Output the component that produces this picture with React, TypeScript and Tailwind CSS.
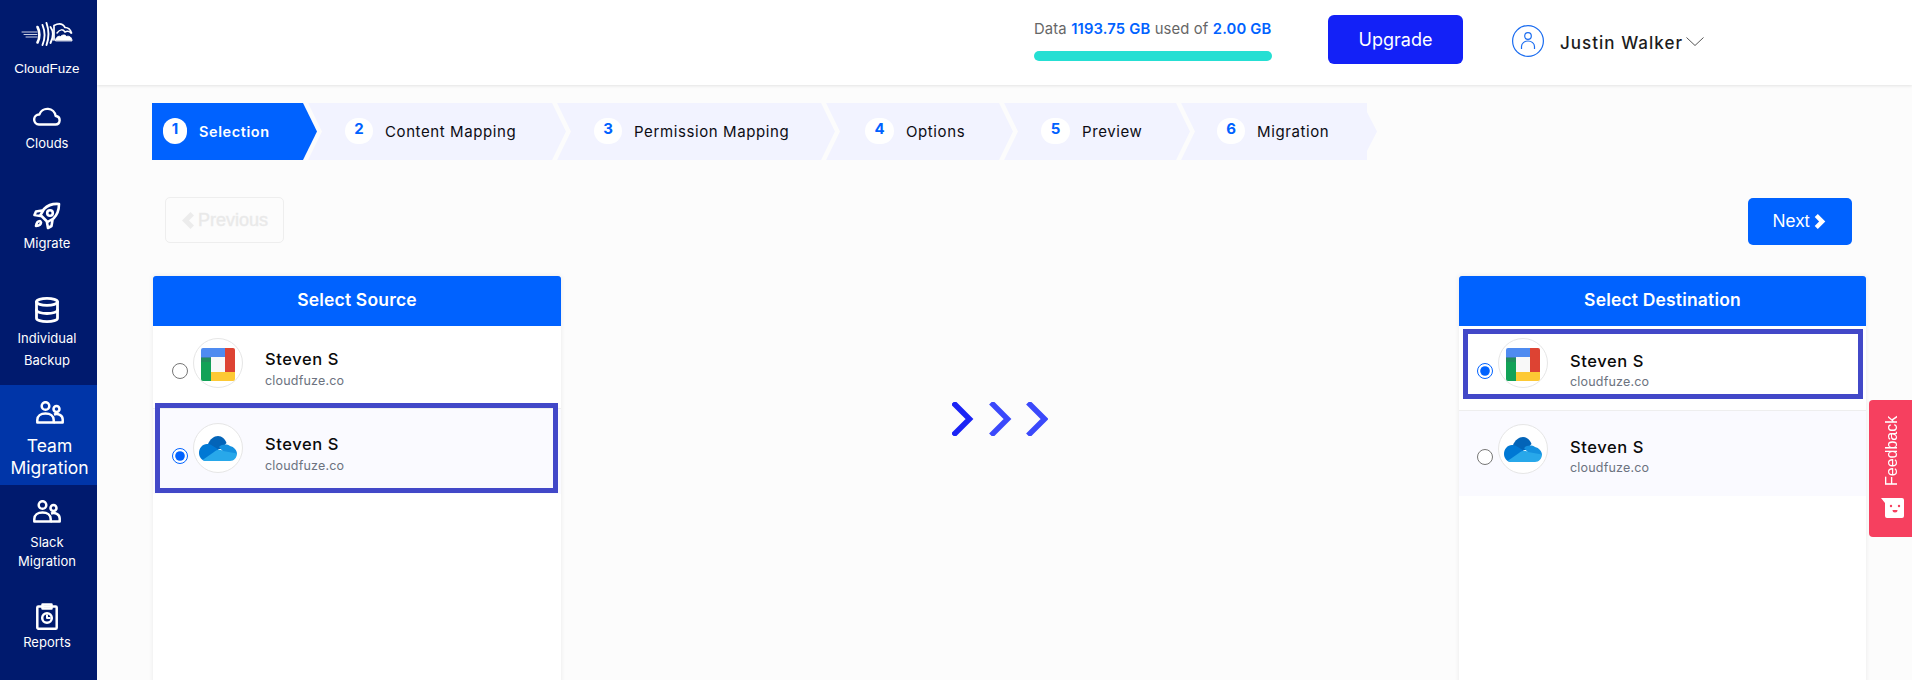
import { Database } from 'lucide-react';

const STEPS = [
  { n: 1, label: 'Selection', width: 'w-[165px]', circle: 'ml-[11px] w-[24px]' },
  { n: 2, label: 'Content Mapping', width: 'w-[258px]', circle: 'ml-[37px] w-[28px]' },
  { n: 3, label: 'Permission Mapping', width: 'w-[278px]', circle: 'ml-[37px] w-[28px]' },
  { n: 4, label: 'Options', width: 'w-[187px]', circle: 'ml-[39px] w-[29px]' },
  { n: 5, label: 'Preview', width: 'w-[186px]', circle: 'ml-[37px] w-[29px]' },
  { n: 6, label: 'Migration', width: 'w-[196px]', circle: 'ml-[36px] w-[28px]' },
];

const poppins = "font-['Inter',sans-serif]";

function Logo() {
  return (
    <svg width="52" height="24" viewBox="0 0 52 24" fill="none" stroke="white" strokeLinecap="round">
      <path d="M1 10h15M3 12.500h13M5 15h11" strokeWidth="0.8" />
      <path d="M16.500 5c2.500 4.500 2.500 11 0 15.500" strokeWidth="2.600" />
      <path d="M21.500 3c2.500 6 2.500 14 0 20M25.500 1c2.500 7 2.500 15 0 22" strokeWidth="1.900" />
      <path d="M29.500 5c3 4 3 10 0 16" strokeWidth="1.900" />
      <path d="M33 18V3.500c5-2.500 9-1.500 11 2 3 0 5.500 2 6.500 5.500" strokeWidth="1.700" />
      <path d="M36 11c3-4 6-4 8-1 2-1 4-1 6 1" strokeWidth="1.500" />
      <path d="M34.500 18.500c0-3 3-5 5-4 2-2 5-2 6 0 3-1 5.500 1 5.500 4z" fill="white" strokeWidth="1" />
    </svg>
  );
}

function CloudIcon() {
  return (
    <svg width="28" height="20" viewBox="0 0 28 20" fill="none" stroke="white" strokeWidth="2.400" strokeLinejoin="round">
      <path d="M6 18.500h16.500a4.300 4.300 0 0 0 .700-8.500h-.500a8.500 8.500 0 0 0-16.400-1.500 5 5 0 0 0-.300 10z" />
    </svg>
  );
}

function RocketIcon() {
  return (
    <svg width="28" height="28" viewBox="0 0 28 28" fill="none" stroke="white" strokeWidth="2.600" strokeLinejoin="round" strokeLinecap="round">
      <path d="M26 2c-6-.500-11 1-15 5l-3.500 6 7 7 6-3.500c4-4 5.500-9 5.500-14.500z" />
      <circle cx="17" cy="11" r="2.800" />
      <path d="M9 8.500 3 9.500 1.500 13l6 1M19.500 18l-1 6-3.500 2-1-5.500" />
      <path d="M7 19c-2 0-3.500 1.500-4 5 4-.500 5-2 5-3.500z" />
    </svg>
  );
}

function TeamIcon() {
  return (
    <svg width="28" height="23" viewBox="0 0 28 23" fill="none" stroke="white" strokeWidth="2.500" strokeLinejoin="round">
      <circle cx="9.500" cy="5" r="3.800" />
      <circle cx="20.500" cy="8" r="3" />
      <path d="M1.300 21.500v-2.500c0-4 3.500-6.500 8.200-6.500s8.200 2.500 8.200 6.500v2.500z" />
      <path d="M18 13.500c4-1.200 8.700.500 8.700 5v3H17.700" />
    </svg>
  );
}

function ReportIcon() {
  return (
    <svg width="22" height="27" viewBox="0 0 22 27" fill="none" stroke="white" strokeWidth="2.500" strokeLinejoin="round">
      <rect x="1.300" y="3.500" width="19.400" height="22.200" rx="1" />
      <path d="M6.500 5.500V1.500h9v4z" />
      <circle cx="11" cy="15" r="4.800" />
      <path d="M11 11.500v3.500h3.500" strokeWidth="2" />
    </svg>
  );
}

function MeetLogo() {
  return (
    <svg className="mt-[2px] blur-[0.4px]" width="34" height="33" viewBox="0 0 34 33">
      <path d="M2 0h22v9H10v1H0V2a2 2 0 0 1 2-2z" fill="#4f8bf0" />
      <path d="M24 0h8a2 2 0 0 1 2 2v22H24z" fill="#dd4333" />
      <path d="M0 10h10v23H2a2 2 0 0 1-2-2z" fill="#12a257" />
      <path d="M10 24h24v7a2 2 0 0 1-2 2H10z" fill="#fdc934" />
      <rect x="0" y="9" width="10" height="5" fill="#2b7d62" opacity="0.55" />
      <rect x="10" y="9" width="14" height="15" fill="#f8f8f8" />
    </svg>
  );
}

function OneDriveLogo() {
  return (
    <svg className="blur-[0.3px]" width="38" height="25" viewBox="0 0 38 25">
      <path d="M9 8C11 3 15 0 19 0c4 0 7 3 8.500 7L22 13H10z" fill="#0364b8" />
      <path d="M0 17c0-5 3.500-9 8-9 2 0 4 .500 5 1.500L22 15 7 25c-4 0-7-4-7-8z" fill="#0078d4" />
      <path d="M20 11c3-3 8-3 11-1 4 1 7 4 7 8l-10 2z" fill="#1490df" />
      <path d="M3.500 24 15 16c3-2.500 6-3 9-1l14 2.500c0 4-3 7.500-7 7.500H7c-1.300 0-2.500-.300-3.500-1z" fill="#28a8ea" />
    </svg>
  );
}

function Row({ logo, checked, className, nameClass, domainClass }: { logo: 'meet' | 'onedrive'; checked: boolean; className: string; nameClass: string; domainClass: string }) {
  return (
    <div className={`flex items-start ${className}`}>
      <input type="radio" readOnly checked={checked} className="m-0 mt-[25px] h-4 w-4 shrink-0 accent-[#0062ff]" />
      <div className="ml-[5px] flex h-[50px] w-[50px] shrink-0 items-center justify-center rounded-full border border-[#e6e6e6] bg-white">
        {logo === 'meet' ? <MeetLogo /> : <OneDriveLogo />}
      </div>
      <div className={`ml-[22px] ${poppins}`}>
        <div className={`text-[16.500px] leading-[20px] font-medium tracking-[0.035em] text-[#0a0a0a] ${nameClass}`}>Steven S</div>
        <div className={`text-[12.500px] leading-[16px] tracking-[0.015em] text-[#6c7380] ${domainClass}`}>cloudfuze.co</div>
      </div>
    </div>
  );
}

function Nav({ label, icon, className, text }: { label: string[]; icon: React.ReactNode; className: string; text: string }) {
  return (
    <div className={`flex h-[100px] shrink-0 flex-col items-center text-center text-white ${className}`}>
      {icon}
      <div className={text}>
        {label.map((l) => (
          <div key={l}>{l}</div>
        ))}
      </div>
    </div>
  );
}

export default function App() {
  return (
    <div className={`relative flex h-[680px] w-[1912px] overflow-hidden bg-[#fcfcfc] ${poppins}`}>
      {/* Sidebar */}
      <aside className="flex w-[97px] shrink-0 flex-col bg-[#001a6e] pr-[3px]">
        <div className="-mr-[3px] flex h-[85px] shrink-0 flex-col items-center pt-[22px] pr-[3px] text-white">
          <Logo />
          <div className="mt-[14px] font-['Liberation_Sans',sans-serif] text-[13.500px] leading-[18px]">CloudFuze</div>
        </div>
        <Nav label={['Clouds']} className="pt-[21px]" text="mt-[7px] text-[13px] leading-[21px]" icon={<CloudIcon />} />
        <Nav label={['Migrate']} className="pt-[17px]" text="mt-[3px] text-[13px] leading-[21px]" icon={<RocketIcon />} />
        <Nav label={['Individual', 'Backup']} className="pt-[11px]" text="mt-[3px] text-[13px] leading-[22px]" icon={<Database size={28} strokeWidth={2.4} />} />
        <Nav
          label={['Team', 'Migration']}
          className="-mr-[3px] bg-[#0035a8] pt-[16px] pl-[2px]"
          text="mt-[11px] text-[17.500px] leading-[22px]"
          icon={<TeamIcon />}
        />
        <Nav label={['Slack', 'Migration']} className="pt-[15px]" text="mt-[10px] text-[13px] leading-[19px]" icon={<TeamIcon />} />
        <Nav label={['Reports']} className="pt-[18px]" text="mt-[2px] text-[13px] leading-[21px]" icon={<ReportIcon />} />
      </aside>

      <div className="flex min-w-0 flex-1 flex-col">
        {/* Header */}
        <header className="flex h-[85px] shrink-0 items-start bg-white pl-[937px] shadow-[0_1px_3px_rgba(0,0,0,0.1)]">
          <div className="mt-[20px] w-[238px]">
            <div className="text-[14.800px] leading-[18px] tracking-[0.01em] whitespace-nowrap text-[#666]">
              Data <b className="font-semibold text-[#0062ff]">1193.75 GB</b> used of <b className="font-semibold text-[#0062ff]">2.00 GB</b>
            </div>
            <div className="mt-[13px] h-[10px] rounded-full bg-[#25dfd3]" />
          </div>
          <button className="mt-[15px] ml-[56px] h-[49px] w-[135px] rounded-[6px] bg-[#1321f7] text-[18px] text-white">Upgrade</button>
          <svg className="mt-[25px] ml-[49px]" width="32" height="32" viewBox="0 0 32 32" fill="none" stroke="#1a6cf0" strokeWidth="1.200">
            <circle cx="16" cy="16" r="15.400" />
            <circle cx="16" cy="11" r="3.300" />
            <path d="M9.500 24v-2.500a6.500 5.500 0 0 1 13 0V24" />
          </svg>
          <div className="mt-[31px] ml-[16px] text-[17px] leading-[24px] font-medium tracking-[0.06em] whitespace-nowrap text-[#1c1c1c]">Justin Walker</div>
          <svg className="mt-[37px] ml-[3px]" width="18" height="9" viewBox="0 0 18 9" fill="none" stroke="#555" strokeWidth="1">
            <path d="M.500.500 9 8.500 17.500.500" />
          </svg>
        </header>

        <main className="flex min-h-0 flex-1 flex-col pt-[18px] pr-[46px] pl-[55px]">
          {/* Stepper */}
          <div className="flex h-[57px] shrink-0 items-stretch">
            {STEPS.map((s, i) => {
              const active = i === 0;
              const clip =
                i === 0
                  ? '[clip-path:polygon(0_0,calc(100%-14px)_0,100%_50%,calc(100%-14px)_100%,0_100%)]'
                  : i === 5
                    ? '[clip-path:polygon(0_0,calc(100%-10px)_0,calc(100%-10px)_9px,100%_50%,calc(100%-10px)_calc(100%-9px),calc(100%-10px)_100%,0_100%,14px_50%)]'
                    : '[clip-path:polygon(0_0,calc(100%-14px)_0,100%_50%,calc(100%-14px)_100%,0_100%,14px_50%)]';
              return (
                <div
                  key={s.n}
                  className={`flex shrink-0 items-center ${s.width} ${clip} ${i > 0 ? '-ml-[9px]' : ''} ${active ? 'bg-[#0062ff] text-white' : 'bg-[#f2f3ff] text-[#0c0c14]'}`}
                >
                  <span className={`-mt-[1px] flex h-[26px] shrink-0 items-center justify-center rounded-full bg-white pb-[3px] text-[15px] font-bold text-[#0062ff] ${s.circle}`}>
                    {s.n}
                  </span>
                  <span className={`mt-[1px] ml-[12px] whitespace-nowrap ${active ? 'text-[14.500px] font-semibold tracking-[0.04em]' : 'text-[15px] font-normal tracking-[0.04em]'}`}>{s.label}</span>
                </div>
              );
            })}
          </div>

          {/* Previous / Next */}
          <div className="mt-[37px] flex h-[48px] shrink-0 items-start justify-between pr-[14px] pl-[13px] font-['Liberation_Sans',sans-serif]">
            <button className="flex h-[46px] w-[119px] items-center justify-center rounded-[5px] border border-[#eeeeee] pl-[1px] text-[18px] text-[#e8e8e8] [-webkit-text-stroke:0.5px_#ececec]">
              <svg className="mr-[4px]" width="12" height="17" viewBox="0 0 12 17" fill="#ececec">
                <path d="M8.500 0 12 3.500 7 8.500l5 5L8.500 17 0 8.500z" />
              </svg>
              Previous
            </button>
            <button className="mt-[1px] flex h-[47px] w-[104px] items-center justify-center rounded-[5px] bg-[#0062ff] pr-[2px] text-[18px] text-white">
              Next
              <svg className="ml-[4px]" width="12" height="15" viewBox="0 0 12 17" fill="white">
                <path d="M3.500 0 0 3.500l5 5-5 5L3.500 17 12 8.500z" />
              </svg>
            </button>
          </div>

          {/* Source and destination */}
          <div className="mt-[31px] flex min-h-0 flex-1 items-stretch">
            <section className="relative ml-[1px] h-[420px] w-[408px] shrink-0 bg-white shadow-[0_0_5px_rgba(0,0,0,0.08)]">
              <div className="flex h-[50px] items-center justify-center rounded-t-[3px] bg-[#0062ff] pb-[2px] text-[17.500px] font-semibold tracking-[0.01em] text-white">Select Source</div>
              <Row logo="meet" checked={false} nameClass="mt-[11px]" domainClass="mt-[4px]" className="h-[83px] border-b border-[#eeeeee] pt-[12px] pl-[19px]" />
              <Row logo="onedrive" checked nameClass="mt-[11px]" domainClass="mt-[4px]" className="h-[85px] bg-[#fafaff] pt-[14px] pl-[19px]" />
              <div className="absolute top-[127px] left-[2px] h-[90px] w-[403px] border-[5px] border-[#4248c8]" />
            </section>

            <div className="flex flex-1 justify-center pt-[126px] pr-[20px]">
              <svg width="96" height="34" viewBox="0 0 96 34" fill="none" strokeWidth="5.500" strokeLinecap="square">
                <path d="M3 2.500 17.500 17 3 31.500" stroke="#1b24f5" />
                <path d="M41 2.500 55.500 17 41 31.500" stroke="#3b49fb" />
                <path d="M78 2.500 92.500 17 78 31.500" stroke="#3b49fb" />
              </svg>
            </div>

            <section className="relative h-[420px] w-[407px] shrink-0 bg-white shadow-[0_0_5px_rgba(0,0,0,0.08)]">
              <div className="flex h-[50px] items-center justify-center rounded-t-[3px] bg-[#0062ff] pb-[2px] text-[17.500px] font-semibold tracking-[0.01em] text-white">Select Destination</div>
              <Row logo="meet" checked nameClass="mt-[13px]" domainClass="mt-[3px]" className="h-[85px] border-b border-[#eeeeee] pt-[12px] pl-[18px]" />
              <Row logo="onedrive" checked={false} nameClass="mt-[13px]" domainClass="mt-[3px]" className="h-[85px] bg-[#fafaff] pt-[13px] pl-[18px]" />
              <div className="absolute top-[53px] left-[4px] h-[70px] w-[400px] border-[5px] border-[#4248c8]" />
            </section>
          </div>
        </main>
      </div>

      {/* Feedback tab */}
      <div className="absolute top-[400px] right-0 flex h-[137px] w-[43px] flex-col items-center rounded-l-[4px] bg-[#f6405f] pt-[14px] pl-[2px] font-['Liberation_Sans',sans-serif] text-white">
        <span className="h-[72px] text-[16px] leading-[20px] [writing-mode:vertical-rl] rotate-180">Feedback</span>
        <svg className="mt-[12px] ml-[2px]" width="23" height="20" viewBox="0 0 23 20">
          <path d="M0 0h21a2 2 0 0 1 2 2v16a2 2 0 0 1-2 2H6a2 2 0 0 1-2-2V5z" fill="white" />
          <circle cx="10" cy="8" r="1.200" fill="#f6405f" />
          <circle cx="18" cy="8" r="1.200" fill="#f6405f" />
          <path d="M11.500 12h5a2.500 2.500 0 0 1-5 0z" fill="#f6405f" />
        </svg>
      </div>
    </div>
  );
}
